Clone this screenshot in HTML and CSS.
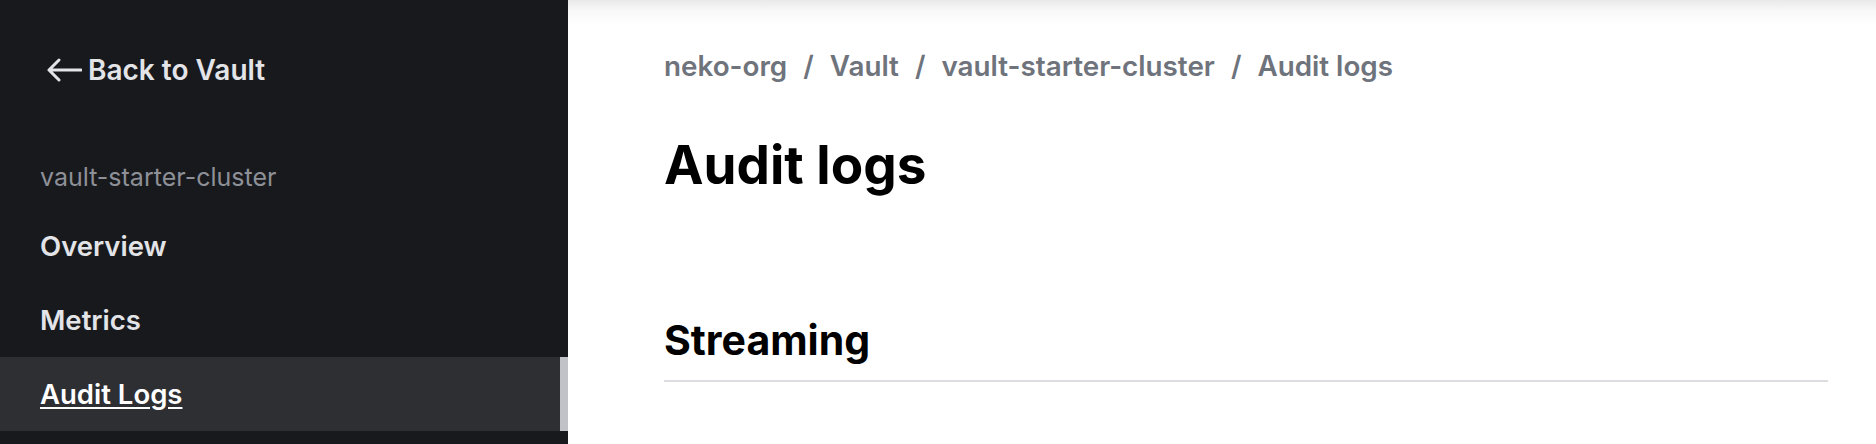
FILE: index.html
```html
<!DOCTYPE html>
<html lang="en">
<head>
    <meta charset="UTF-8">
    <meta name="viewport" content="width=device-width, initial-scale=1.0">
    <title>Audit logs - vault-starter-cluster</title>
    <link rel="stylesheet" href="styles.css">
</head>
<body>
    <aside class="sidebar">
        <a class="back-link" href="#">
            <svg class="back-icon" viewBox="0 0 36 24" width="36" height="24" aria-hidden="true">
                <path d="M35 12H3M13 2L3 12l10 10" fill="none" stroke="currentColor" stroke-width="3" stroke-linecap="round" stroke-linejoin="round"/>
            </svg>
            Back to Vault
        </a>

        <div class="cluster-name">vault-starter-cluster</div>

        <nav class="side-nav">
            <a class="nav-item" href="#">Overview</a>
            <a class="nav-item" href="#">Metrics</a>
            <a class="nav-item active" href="#">Audit Logs</a>
        </nav>
    </aside>

    <main class="content">
        <ol class="breadcrumbs">
            <li><a href="#">neko-org</a></li>
            <li class="sep">/</li>
            <li><a href="#">Vault</a></li>
            <li class="sep">/</li>
            <li><a href="#">vault-starter-cluster</a></li>
            <li class="sep">/</li>
            <li>Audit logs</li>
        </ol>

        <h1 class="page-title">Audit logs</h1>

        <section class="streaming">
            <h2>Streaming</h2>
        </section>
    </main>
</body>
</html>
```

FILE: styles.css
```css
body {
    margin: 0;
    display: flex;
    height: 100vh;
    font-family: Inter, "Noto Sans", sans-serif;
    background: #fff;
    overflow: hidden;
}
a {
    color: inherit;
    text-decoration: none;
}

/* sidebar */
.sidebar {
    width: 568px;
    flex-shrink: 0;
    background: #18191d;
    color: #e3e4e8;
}
.back-link {
    display: flex;
    align-items: center;
    gap: 6px;
    margin: 53px 0 0 46px;
    font-size: 28px;
    font-weight: 600;
    line-height: 34px;
}
.back-icon {
    flex-shrink: 0;
}
.cluster-name {
    margin: 75px 0 0 40px;
    font-size: 25px;
    line-height: 30px;
    color: #8d9097;
}
.side-nav {
    display: flex;
    flex-direction: column;
    margin-top: 17px;
}
.nav-item {
    height: 74px;
    line-height: 74px;
    padding-left: 40px;
    font-size: 27.5px;
    font-weight: 600;
}
.nav-item.active {
    background: #2e2f33;
    color: #fff;
    text-decoration: underline;
    text-underline-offset: 3px;
    border-right: 8px solid #c1c2c8;
}

/* main */
.content {
    flex: 1;
    padding: 0 48px 0 96px;
    background: linear-gradient(#e9e9e9, #f7f7f7 10px, #fff 26px);
}
.breadcrumbs {
    display: flex;
    gap: 16px;
    list-style: none;
    margin: 49px 0 0;
    padding: 0;
    font-size: 27.8px;
    font-weight: 600;
    line-height: 34px;
    color: #6e737c;
}
.page-title {
    margin: 50px 0 0;
    font-size: 53px;
    font-weight: 700;
    line-height: 64px;
    color: #000;
}
.streaming h2 {
    margin: 119px 0 0;
    padding-bottom: 16px;
    border-bottom: 2px solid #dcdde1;
    font-size: 41px;
    font-weight: 700;
    line-height: 48px;
    color: #000;
}
```
